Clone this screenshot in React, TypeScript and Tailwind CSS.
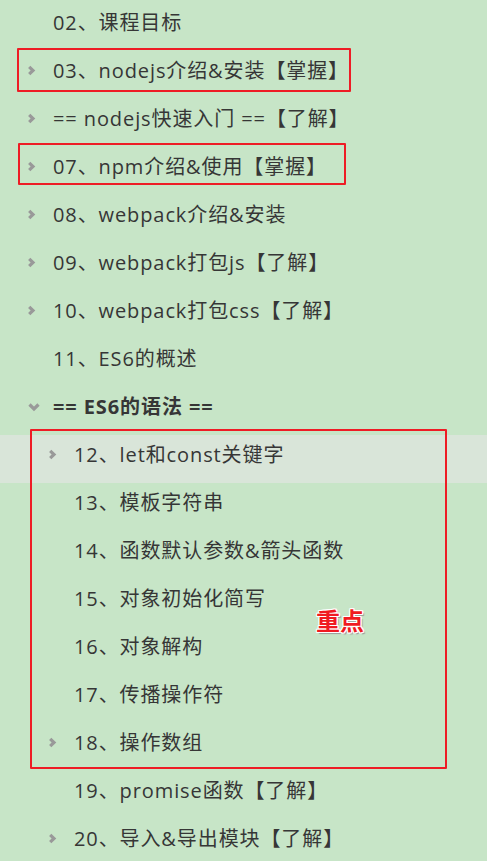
const rows: { text: string; level: 1 | 2; icon?: "right" | "down"; bold?: boolean; active?: boolean }[] = [
  { text: "02、课程目标", level: 1 },
  { text: "03、nodejs介绍&安装【掌握】", level: 1, icon: "right" },
  { text: "== nodejs快速入门 ==【了解】", level: 1, icon: "right" },
  { text: "07、npm介绍&使用【掌握】", level: 1, icon: "right" },
  { text: "08、webpack介绍&安装", level: 1, icon: "right" },
  { text: "09、webpack打包js【了解】", level: 1, icon: "right" },
  { text: "10、webpack打包css【了解】", level: 1, icon: "right" },
  { text: "11、ES6的概述", level: 1 },
  { text: "== ES6的语法 ==", level: 1, icon: "down", bold: true },
  { text: "12、let和const关键字", level: 2, icon: "right", active: true },
  { text: "13、模板字符串", level: 2 },
  { text: "14、函数默认参数&箭头函数", level: 2 },
  { text: "15、对象初始化简写", level: 2 },
  { text: "16、对象解构", level: 2 },
  { text: "17、传播操作符", level: 2 },
  { text: "18、操作数组", level: 2, icon: "right" },
  { text: "19、promise函数【了解】", level: 2 },
  { text: "20、导入&导出模块【了解】", level: 2, icon: "right" },
];

const Chevron = ({ dir }: { dir: "right" | "down" }) =>
  dir === "right" ? (
    <svg width="9" height="11" viewBox="0 0 9 11">
      <polyline points="2.2,1.8 6,5.5 2.2,9.2" fill="none" stroke="#999999" strokeWidth="3.2" />
    </svg>
  ) : (
    <svg width="14" height="10" viewBox="0 0 14 10">
      <polyline points="2.5,2.5 7,7 11.5,2.5" fill="none" stroke="#999999" strokeWidth="3.2" />
    </svg>
  );

export default function App() {
  return (
    <div
      className="relative w-[487px] h-[861px] overflow-hidden bg-[#c7e5c7] text-[#363636]"
      style={{ fontFamily: '"Open Sans", "Noto Sans CJK SC", sans-serif' }}
    >
      <ul className="pt-[3px]">
        {rows.map((r, i) => (
          <li
            key={i}
            className={`flex items-center h-[48px] pb-[9px] ${r.active ? "bg-[#d9e5d9]" : ""} ${
              r.level === 1 ? "pl-[27px]" : "pl-[48px]"
            }`}
          >
            <span className="w-[26px] flex items-center">{r.icon && <Chevron dir={r.icon} />}</span>
            <span
              className={`text-[20px] leading-none whitespace-nowrap tracking-[0.9px] ${
                r.bold ? "font-bold" : ""
              }`}
            >
              {r.text}
            </span>
          </li>
        ))}
      </ul>

      <div className="absolute left-[17px] top-[48px] w-[334px] h-[44px] border-2 border-[#ee1c25] rounded-[1px]" />
      <div className="absolute left-[18px] top-[143px] w-[328px] h-[42px] border-2 border-[#ee1c25] rounded-[1px]" />
      <div className="absolute left-[30px] top-[429px] w-[417px] h-[340px] border-2 border-[#ee1c25] rounded-[1px]" />

      <div
        className="absolute left-[316px] top-[608px] text-[24px] font-bold leading-none text-[#f01a22]"
        style={{
          fontFamily: '"Noto Sans CJK SC", sans-serif',
          textShadow:
            "1px 0 #fff, -1px 0 #fff, 0 1px #fff, 0 -1px #fff, 1px 1px #fff, -1px -1px #fff, 1px -1px #fff, -1px 1px #fff, 2px 2px 1px #9a9a9a",
        }}
      >
        重点
      </div>
    </div>
  );
}
